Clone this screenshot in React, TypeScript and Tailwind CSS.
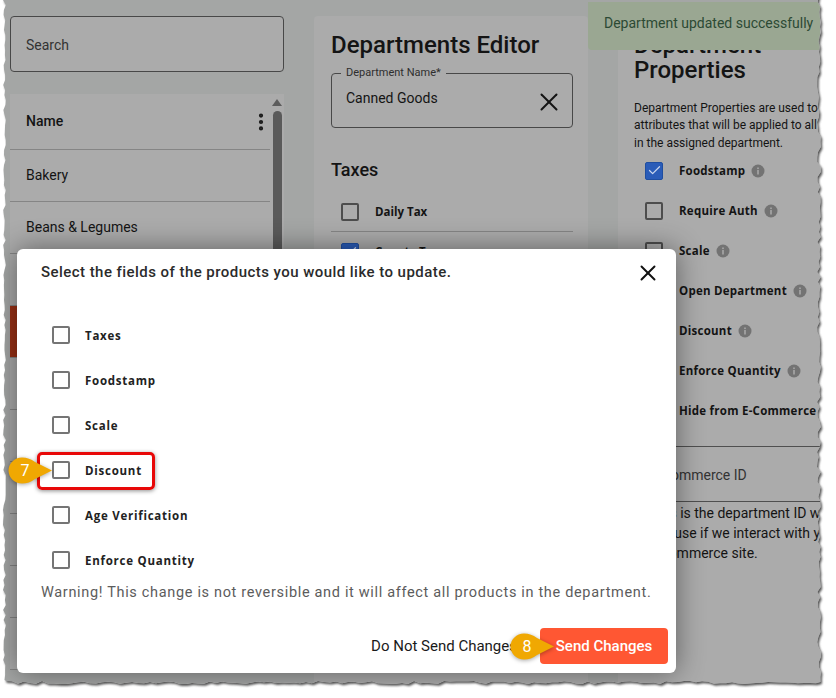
import { X, EllipsisVertical, Check } from "lucide-react";

const departments = ["Bakery", "Beans & Legumes", "Beverages", "Canned Goods", "Dairy", "Deli", "Frozen", "Meat", "Produce", "Snacks"];
const taxes = ["Daily Tax", "County Tax"];
const properties = [
  { label: "Foodstamp", checked: true },
  { label: "Require Auth" },
  { label: "Scale" },
  { label: "Open Department" },
  { label: "Discount" },
  { label: "Enforce Quantity" },
  { label: "Hide from E-Commerce" },
];
const fields = ["Taxes", "Foodstamp", "Scale", "Discount", "Age Verification", "Enforce Quantity"];

// jagged outline of the torn screenshot edge
function tornOutline() {
  let seed = 7;
  const rnd = () => {
    seed = (seed * 16807) % 2147483647;
    return seed / 2147483647;
  };
  const pts: string[] = ["4,-10"];
  for (let y = 0; y < 682; y += 5) pts.push(`${(3 + rnd() * 3).toFixed(1)},${y}`);
  for (let x = 6; x < 820; x += 6) pts.push(`${x},${(681 + rnd() * 3).toFixed(1)}`);
  for (let y = 682; y > 0; y -= 5) pts.push(`${(817 + rnd() * 4).toFixed(1)},${y}`);
  pts.push("820,-10");
  return "M" + pts.join("L") + "Z";
}
const outline = tornOutline();

function TornEdge() {
  const outside = `M-10,-20H846V708H-10Z${outline}`;
  return (
    <svg className="absolute inset-0 pointer-events-none" width="836" height="698" viewBox="0 0 836 698">
      <defs>
        <clipPath id="outside">
          <path d={outside} clipRule="evenodd" />
        </clipPath>
        <filter id="blur" x="-5%" y="-5%" width="110%" height="110%">
          <feGaussianBlur stdDeviation="1.2" />
        </filter>
      </defs>
      <path d={outside} fill="#ffffff" fillRule="evenodd" />
      <g clipPath="url(#outside)">
        <path d={outline} transform="translate(1.5 2)" fill="#555555" filter="url(#blur)" />
      </g>
    </svg>
  );
}

function Info() {
  return (
    <svg width="14" height="14" viewBox="0 0 14 14" className="shrink-0">
      <circle cx="7" cy="7" r="6.5" fill="#737373" />
      <rect x="6.2" y="6" width="1.6" height="4.5" fill="#a8a8a8" />
      <rect x="6.2" y="3.5" width="1.6" height="1.6" fill="#a8a8a8" />
    </svg>
  );
}

function DimBox({ checked }: { checked?: boolean }) {
  return checked ? (
    <span className="flex h-[18px] w-[18px] shrink-0 items-center justify-center rounded-[2px] border border-[#1f4ea0] bg-[#2a5cb8]">
      <Check size={15} strokeWidth={2} className="text-[#c9d6ee]" />
    </span>
  ) : (
    <span className="h-[18px] w-[18px] shrink-0 rounded-[2px] border-2 border-[#4d4d4d]" />
  );
}

function Callout({ n, className }: { n: number; className: string }) {
  return (
    <div className={`absolute h-[27px] w-[45px] ${className}`}>
      <svg width="45" height="27" viewBox="0 0 45 27" className="absolute inset-0 drop-shadow-[0_1px_2px_rgba(0,0,0,0.35)]">
        <path d="M14 0.5C19 0.5 23 2 27 5L44 13.5L27 22C23 25 19 26.5 14 26.5C6.5 26.5 0.5 20.5 0.5 13.5C0.5 6.5 6.5 0.5 14 0.5Z" fill="#f0a802" />
      </svg>
      <span className="absolute left-[5px] top-0 flex h-[27px] w-[24px] items-center justify-center text-[16px] text-white">{n}</span>
    </div>
  );
}

export default function App() {
  return (
    <div className="relative h-[698px] w-[836px] overflow-hidden bg-[#a4a6a5] font-['Roboto',sans-serif]">
      {/* page behind the dialog */}
      <div className="flex gap-[30px] pl-[10px] pt-4 text-[#141414]">
        <div className="w-[274px] shrink-0">
          <div className="flex h-[56px] items-center rounded-[4px] border border-[#484848] bg-[#ababab] px-[15px] pt-[2px] text-[14px] text-[#333333]">
            Search
          </div>
          <div className="mt-[22px] flex bg-[#ababab]">
            <div className="w-[260px]">
              <div className="flex h-[56px] items-center justify-between border-b border-[#858585] pl-4 text-[14px] font-medium">
                Name
                <EllipsisVertical size={22} strokeWidth={2.6} className="-mr-[2px] text-[#1a1a1a]" />
              </div>
              {departments.map((d) => (
                <div
                  key={d}
                  className={`flex h-[52px] items-center border-b border-[#858585] pl-4 text-[14px] ${d === "Canned Goods" ? "bg-[#9a3015]" : ""}`}
                >
                  {d}
                </div>
              ))}
            </div>
            <div className="flex w-[14px] flex-col items-center pt-[5px]">
              <svg width="10" height="7" viewBox="0 0 10 7">
                <path d="M5 0L10 7H0Z" fill="#5c5c5c" />
              </svg>
              <div className="mt-[5px] h-[500px] w-[9px] rounded-full bg-[#5a5a5a]" />
            </div>
          </div>
        </div>

        <div className="h-[700px] w-[274px] shrink-0 rounded-t-[4px] bg-[#ababab] pl-[17px] pr-[15px] pt-[14px]">
          <h1 className="text-[24px] font-medium leading-[30px]">Departments Editor</h1>
          <div className="relative mt-[13px] flex h-[55px] items-start justify-between rounded-[4px] border border-[#484848] pl-[14px] pr-[8px] pt-[14px] text-[14px]">
            <span className="absolute -top-[8px] left-[9px] bg-[#ababab] px-[5px] text-[11px] leading-[14px] text-[#2e2e2e]">Department Name*</span>
            Canned Goods
            <X size={30} strokeWidth={1.6} className="-mt-[1px]" />
          </div>
          <h2 className="mt-[30px] text-[18px] font-medium leading-[24px]">Taxes</h2>
          <div className="mt-[10px]">
            {taxes.map((t) => (
              <div key={t} className="flex h-[40px] items-center gap-[16px] border-b border-[#858585] pl-[10px] font-['Open_Sans',sans-serif] text-[11.5px] font-bold">
                <DimBox checked={t === "County Tax"} />
                {t}
              </div>
            ))}
          </div>
        </div>

        <div className="h-[700px] flex-1 bg-[#ababab] pl-[16px] pt-[16.5px]">
          <h1 className="w-[150px] text-[24px] font-medium leading-[25px]">Department Properties</h1>
          <p className="mt-[17.5px] w-[190px] whitespace-nowrap text-[12px] leading-[17.33px]">
            Department Properties are used to
            <br />
            attributes that will be applied to all
            <br />
            in the assigned department.
          </p>
          <div className="-mt-[1px]">
            {properties.map((p) => (
              <div key={p.label} className="flex h-[40px] items-center pl-[11px] font-['Open_Sans',sans-serif] text-[11.5px] font-bold tracking-[0.25px]">
                <DimBox checked={p.checked} />
                <span className="ml-[16px] mr-[6px] whitespace-nowrap">{p.label}</span>
                <Info />
              </div>
            ))}
          </div>
          <div className="mt-[15px] flex h-[56px] items-center whitespace-nowrap border-y border-[#4f4f4f] pl-[16px] pt-[3px] text-[14px] text-[#333333]">E-Commerce ID</div>
          <p className="whitespace-nowrap pl-[16px] pt-[1px] text-[14px] leading-[20px]">
            This is the department ID w
            <br />
            will use if we interact with y
            <br />
            e-commerce site.
          </p>
        </div>
      </div>

      {/* toast */}
      <div className="absolute left-[588px] top-[2px] flex h-[48px] w-[232px] items-center whitespace-nowrap rounded-bl-[4px] bg-[#9aa792] pb-[6px] pl-[16px] text-[14px] text-[#2c4a34]">
        Department updated successfully
      </div>

      {/* dialog */}
      <div className="absolute left-[17px] top-[249px] h-[424px] w-[659px] rounded-[6px] bg-white pl-[24px] pr-[8px] shadow-[0_0_28px_rgba(0,0,0,0.45)]">
        <div className="flex h-[47px] items-center justify-between pr-[7px]">
          <span className="text-[15px] font-medium tracking-[0.45px] text-[#2b2b2b]">Select the fields of the products you would like to update.</span>
          <X size={26} strokeWidth={1.8} className="text-[#111111]" />
        </div>
        <div className="mt-[16px] pl-[11px]">
          {fields.map((f) => (
            <div key={f} className="flex h-[45px] items-center font-['Open_Sans',sans-serif] text-[11.5px] font-bold tracking-[0.75px] text-[#222222]">
              <span className="h-[18px] w-[18px] rounded-[2px] border-2 border-[#757575]" />
              <span className="ml-[15px] pt-[2px]">{f}</span>
            </div>
          ))}
        </div>
        <p className="mt-[1px] whitespace-nowrap text-[14.5px] leading-[20px] tracking-[0.67px] text-[#5c5c5c]">
          Warning! This change is not reversible and it will affect all products in the department.
        </p>
        <div className="mt-[25px] flex items-center justify-end">
          <span className="mr-[23px] whitespace-nowrap text-[15px] text-[#1a1a1a]">Do Not Send Changes</span>
          <span className="flex h-[36px] w-[128px] items-center justify-center rounded-[4px] bg-[#ff5733] text-[15px] font-medium text-white">Send Changes</span>
        </div>
      </div>

      {/* annotations */}
      <div className="absolute left-[37px] top-[452px] h-[38px] w-[118px] rounded-[5px] border-[3px] border-[#e80808] shadow-[0_1px_4px_rgba(0,0,0,0.45)]" />
      <Callout n={7} className="left-[8px] top-[457px]" />
      <Callout n={8} className="left-[510px] top-[633px]" />

      <TornEdge />
    </div>
  );
}
